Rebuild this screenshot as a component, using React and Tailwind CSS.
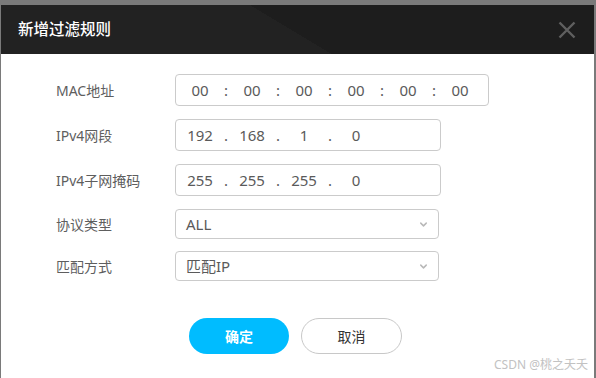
import { ChevronDown } from "lucide-react";

const font = "font-['Noto_Sans','Noto_Sans_CJK_SC',sans-serif]";

function SegmentField({ parts, sep, wide }) {
  return (
    <div
      className={`flex h-[32px] items-center rounded-[4px] border border-[#cbcbcb] pl-[4px] text-[15px] text-[#5a5a5a] ${
        wide ? "w-[314px]" : "w-[266px]"
      }`}
    >
      {parts.map((p, i) => (
        <div key={i} className="flex items-center">
          {i > 0 && <span className="w-[12px] text-center">{sep}</span>}
          <span className="w-[40px] text-center">{p}</span>
        </div>
      ))}
    </div>
  );
}

function SelectField({ value }) {
  return (
    <div className="flex h-[30px] w-[264px] items-center justify-between rounded-[4px] border border-[#cbcbcb] pl-[10px] pr-[9px] text-[15px] text-[#5a5a5a]">
      <span>{value}</span>
      <ChevronDown size={11} strokeWidth={3.2} className="text-[#b8b8b8]" />
    </div>
  );
}

function Row({ label, children }) {
  return (
    <div className="flex items-center">
      <div className="w-[119px] text-[14px] text-[#5e5e5e]">{label}</div>
      {children}
    </div>
  );
}

export default function App() {
  return (
    <div className={`relative h-[378px] w-[596px] bg-[#7a7a7a] pt-[5px] pl-[1px] pr-[2px] ${font}`}>
      <div className="flex h-full flex-col bg-white">
        <div className="flex h-[49px] items-center justify-between bg-[linear-gradient(31deg,#222222_49%,#1d1d1d_49%)] pl-[17px] pr-[18px]">
          <h1 className="text-[15.5px] font-medium text-white">新增过滤规则</h1>
          <svg width="18" height="18" viewBox="0 0 18 18" className="text-[#5f5f5f]">
            <path d="M1.5 1.5 L16.5 16.5 M16.5 1.5 L1.5 16.5" stroke="currentColor" strokeWidth="2.4" />
          </svg>
        </div>

        <div className="flex flex-col gap-[13px] pl-[55px] pt-[20px]">
          <Row label="MAC地址">
            <SegmentField wide sep=":" parts={["00", "00", "00", "00", "00", "00"]} />
          </Row>
          <Row label="IPv4网段">
            <SegmentField sep="." parts={["192", "168", "1", "0"]} />
          </Row>
          <Row label="IPv4子网掩码">
            <SegmentField sep="." parts={["255", "255", "255", "0"]} />
          </Row>
          <Row label="协议类型">
            <SelectField value="ALL" />
          </Row>
          <div className="-mt-[1px]">
            <Row label="匹配方式">
              <SelectField value="匹配IP" />
            </Row>
          </div>
        </div>

        <div className="flex gap-[12px] pl-[188px] pt-[37px]">
          <button className="h-[36px] w-[100px] rounded-full bg-[#00bcff] text-[14px] font-bold text-white">
            确定
          </button>
          <button className="h-[36px] w-[101px] rounded-full border border-[#c8c8c8] bg-white text-[14px] text-[#333]">
            取消
          </button>
        </div>
      </div>
      <span className="absolute bottom-[4px] right-[8px] text-[12px] text-[#c2c2c2]">CSDN @桃之夭夭</span>
    </div>
  );
}
